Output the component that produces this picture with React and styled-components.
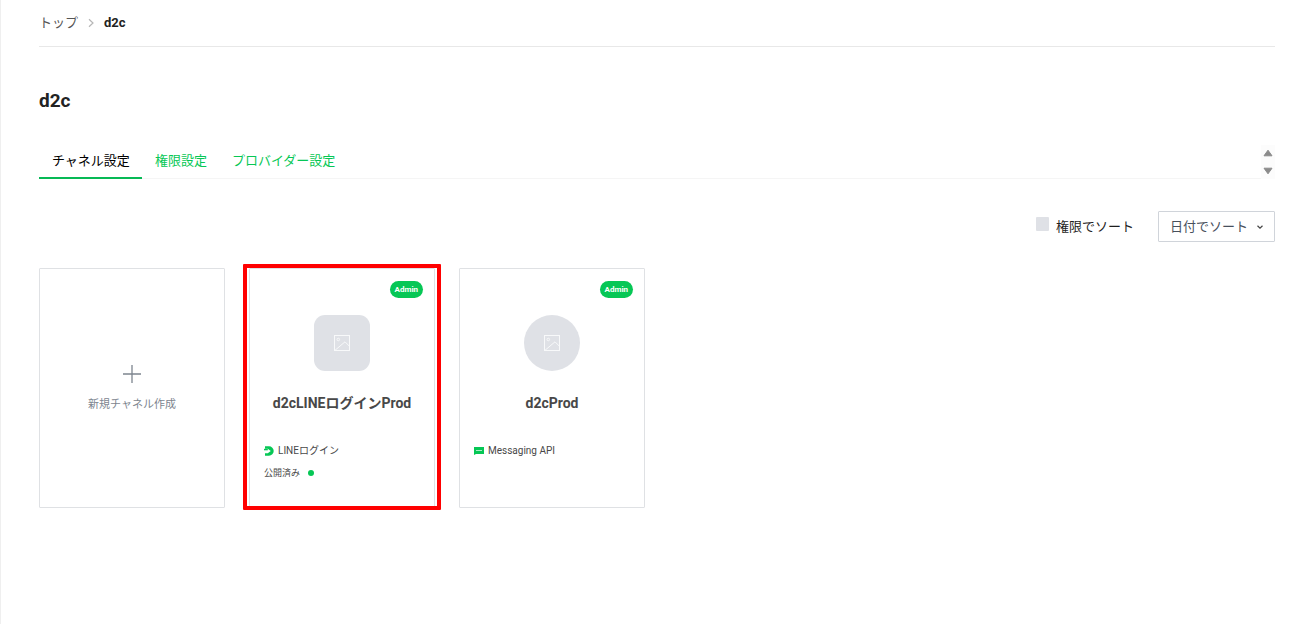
import React from 'react';
import styled, {createGlobalStyle} from 'styled-components';

const Global = createGlobalStyle`
* {
  box-sizing: border-box;
}
body {
  margin: 0;
  background-color: #fff;
  font-family: Roboto, 'Noto Sans CJK JP', sans-serif;
  font-size: 13px;
  line-height: 20px;
  color: #1e1e1e;
}
`

const Page = styled.main`
min-height: 100vh;
border-left: 1px solid #efefef;
padding: 0 33px 0 38px;
`

const Breadcrumb = styled.nav`
display: flex;
align-items: center;
gap: 9px;
height: 47px;
border-bottom: 1px solid #e8e8e8;
padding-bottom: 1px;
`

const Crumb = styled.a`
color: #555;
text-decoration: none;
`

const Current = styled.span`
font-weight: 700;
color: #222;
`

const Title = styled.h1`
margin: 40px 0 31px;
font-size: 19px;
line-height: 27px;
font-weight: 700;
color: #222;
`

const TabBar = styled.div`
display: flex;
justify-content: space-between;
height: 34px;
`

const Tabs = styled.nav`
display: flex;
flex: 1;
border-bottom: 1px solid #f5f5f5;
`

const Tab = styled.a`
height: 34px;
padding: 6px 12px 0 13px;
text-decoration: none;
color: ${props => props.$active ? '#000' : '#06c755'};
border-bottom: 2px solid ${props => props.$active ? '#06b955' : 'transparent'};
`

const Scroller = styled.div`
display: flex;
flex-direction: column;
justify-content: space-between;
width: 14px;
padding: 4px 0;
background-color: #fcfcfc;
`

const Arrow = styled.button`
display: flex;
justify-content: center;
padding: 0;
border: 0;
background: none;
`

const Filters = styled.div`
display: flex;
justify-content: flex-end;
align-items: center;
gap: 24px;
margin: 32px 0 26px;
`

const Check = styled.label`
display: flex;
align-items: center;
gap: 7px;
`

const CheckBox = styled.input`
appearance: none;
width: 13px;
height: 14px;
margin: 0 0 5px;
border-radius: 1px;
background-color: #dfe1e6;
&:checked {
  background-color: #06c755;
}
`

const SortBox = styled.div`
display: grid;
align-items: center;
svg {
  grid-area: 1 / 1;
  justify-self: end;
  margin-right: 12px;
  pointer-events: none;
}
`

const Sort = styled.select`
grid-area: 1 / 1;
appearance: none;
width: 117px;
height: 31px;
padding: 0 26px 0 11px;
border: 1px solid #d0d4da;
border-radius: 1px;
background-color: #fff;
font: inherit;
color: #48505c;
`

const Cards = styled.div`
display: flex;
flex-wrap: wrap;
gap: 24px;
`

const Card = styled.article`
position: relative;
display: flex;
flex-direction: column;
width: 186px;
min-height: 240px;
padding: 12px 11px;
border: 1px solid #dfe1e4;
border-radius: 1px;
`

const Marker = styled.div`
position: absolute;
inset: -5px -7px -3px;
border: 4px solid #ff0000;
border-radius: 1px;
pointer-events: none;
`

const Create = styled.button`
display: flex;
flex-direction: column;
align-items: center;
justify-content: center;
gap: 12px;
width: 186px;
min-height: 240px;
padding: 4px 0 0;
border: 1px solid #dfe1e4;
border-radius: 1px;
background-color: #fff;
font-family: inherit;
font-size: 11px;
line-height: 20px;
color: #7d858f;
`

const Badge = styled.span`
align-self: flex-end;
padding: 0 5px;
border-radius: 9px;
background-color: #06c755;
font-size: 8px;
line-height: 17px;
font-weight: 700;
color: #fff;
`

const Thumb = styled.div`
display: flex;
align-self: center;
align-items: center;
justify-content: center;
width: 56px;
height: 56px;
margin-top: 17px;
border-radius: ${props => props.$round ? '50%' : '11px'};
background-color: #dfe1e6;
`

const Name = styled.h2`
margin: 21px 0 25px;
font-size: 14px;
line-height: 22px;
font-weight: 700;
text-align: center;
white-space: nowrap;
color: #484848;
`

const Kind = styled.div`
display: flex;
align-items: center;
gap: 4px;
padding-left: 3px;
font-size: 10px;
line-height: 24px;
color: #484848;
`

const Status = styled.div`
display: flex;
align-items: center;
gap: 8px;
padding-left: 3px;
font-size: 9px;
line-height: 20px;
color: #484848;
`

const Dot = styled.i`
width: 6px;
height: 6px;
border-radius: 50%;
background-color: #06c755;
`

const ImageIcon = () => (
    <svg width="18" height="18" viewBox="0 0 18 18" fill="none" stroke="#f8f9fa" strokeWidth="1">
        <rect x="1.5" y="1.5" width="15" height="15" />
        <circle cx="5.3" cy="5.5" r="1.3" />
        <path d="M2 16.3 12 7.8l4.4 4.4" />
    </svg>
)

const LoginIcon = () => (
    <svg width="10" height="10" viewBox="0 0 10 10">
        <path d="M1 .3h4a4.7 4.7 0 0 1 0 9.4H1V7.2h2.8L6.8 5 3.8 2.8H1z" fill="#06c755" />
        <path d="M0 2.8h3.8v1.5H0z" fill="#06c755" />
    </svg>
)

const MessageIcon = () => (
    <svg width="10" height="10" viewBox="0 0 10 10">
        <path d="M0 1h10v7H2L0 9z" fill="#06c755" />
        <path d="M2 4.5h6" stroke="#a8ecc4" strokeWidth="1" />
    </svg>
)

const channels = [
    {name: 'd2cLINEログインProd', kind: 'LINEログイン', icon: <LoginIcon />, status: '公開済み', marked: true},
    {name: 'd2cProd', kind: 'Messaging API', icon: <MessageIcon />, round: true},
]

function ChannelCard({channel}){
    return(
        <Card>
            <Badge>Admin</Badge>
            <Thumb $round={channel.round}><ImageIcon /></Thumb>
            <Name>{channel.name}</Name>
            <Kind>{channel.icon}{channel.kind}</Kind>
            {channel.status && <Status>{channel.status}<Dot /></Status>}
            {channel.marked && <Marker />}
        </Card>
    )
}

function App(){
    return(
        <>
            <Global />
            <Page>
                <Breadcrumb>
                    <Crumb href="#top">トップ</Crumb>
                    <svg width="8" height="10" viewBox="0 0 8 10" fill="none" stroke="#b7b7b7" strokeWidth="1.2">
                        <path d="M2 1.2 6 5 2 8.8" />
                    </svg>
                    <Current>d2c</Current>
                </Breadcrumb>
                <Title>d2c</Title>
                <TabBar>
                    <Tabs>
                        <Tab href="#channels" $active>チャネル設定</Tab>
                        <Tab href="#roles">権限設定</Tab>
                        <Tab href="#provider">プロバイダー設定</Tab>
                    </Tabs>
                    <Scroller>
                        <Arrow aria-label="上へ">
                            <svg width="10" height="8" viewBox="0 0 10 8"><path d="M5 1.2 9 6.8H1z" fill="#8b8b8b" stroke="#8b8b8b" strokeLinejoin="round" /></svg>
                        </Arrow>
                        <Arrow aria-label="下へ">
                            <svg width="10" height="8" viewBox="0 0 10 8"><path d="M5 6.8 9 1.2H1z" fill="#8b8b8b" stroke="#8b8b8b" strokeLinejoin="round" /></svg>
                        </Arrow>
                    </Scroller>
                </TabBar>
                <Filters>
                    <Check><CheckBox type="checkbox" />権限でソート</Check>
                    <SortBox>
                        <Sort aria-label="並び順">
                            <option>日付でソート</option>
                        </Sort>
                        <svg width="6" height="6" viewBox="0 0 6 6" fill="none" stroke="#444" strokeWidth="1.2">
                            <path d="M.5 1.8 3 4.2 5.5 1.8" />
                        </svg>
                    </SortBox>
                </Filters>
                <Cards>
                    <Create>
                        <svg width="18" height="18" viewBox="0 0 18 18" stroke="#7d858f" strokeWidth="1.3">
                            <path d="M9 0v18M0 9h18" />
                        </svg>
                        新規チャネル作成
                    </Create>
                    {channels.map((channel, k) => <ChannelCard key={k} channel={channel} />)}
                </Cards>
            </Page>
        </>
    )
}

export default App;
